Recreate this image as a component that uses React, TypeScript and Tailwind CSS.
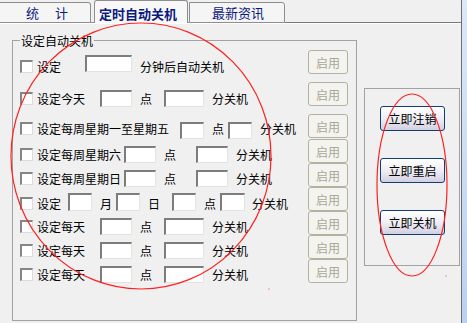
import React from 'react';

const FONT = "font-['Noto_Sans_CJK_SC',sans-serif]";

function Cb({ className = '' }: { className?: string }) {
  return (
    <span
      className={`block h-[13px] w-[13px] shrink-0 border-t-2 border-l-2 border-r border-b border-t-[#858585] border-l-[#858585] border-r-[#dcdcdc] border-b-[#dcdcdc] bg-white ${className}`}
    />
  );
}

function Inp({ className = '' }: { className?: string }) {
  return (
    <span
      className={`block h-[17px] shrink-0 border-t-2 border-l-2 border-r border-b border-t-[#7d7d7d] border-l-[#7d7d7d] border-r-[#e2e2e2] border-b-[#e2e2e2] bg-white ${className}`}
    />
  );
}

function T({ children, className = '' }: { children: React.ReactNode; className?: string }) {
  return <span className={`block shrink-0 whitespace-nowrap text-[12px] leading-[13px] text-black ${className}`}>{children}</span>;
}

function DailyRow({ label, mt }: { label: string; mt: string }) {
  return (
    <div className={`flex h-[17px] items-start ${mt}`}>
      <Cb className="ml-[7px] mt-[2px]" />
      <T className="ml-[4px] mt-[2px]">{label}</T>
      <Inp className="ml-[15px] w-[32px]" />
      <T className="ml-[8px] mt-[2px]">点</T>
      <Inp className="ml-[12px] w-[40px]" />
      <T className="ml-[8px] mt-[2px]">分关机</T>
    </div>
  );
}

function WeekRow({ label }: { label: string }) {
  return (
    <div className="mt-[7px] flex h-[17px] items-start">
      <Cb className="ml-[7px] mt-[2px]" />
      <T className="ml-[4px] mt-[2px]">{label}</T>
      <Inp className="ml-[3px] w-[32px]" />
      <T className="ml-[8px] mt-[2px]">点</T>
      <Inp className="ml-[20px] w-[32px]" />
      <T className="ml-[8px] mt-[2px]">分关机</T>
    </div>
  );
}

function EnableBtn({ className = '' }: { className?: string }) {
  return (
    <div
      className={`flex h-[24px] w-[40px] items-center justify-center rounded-[3px] border border-[#b4b29e] bg-[#f3f3ef] text-[12px] leading-[13px] text-[#aaa896] ${className}`}
    >
      启用
    </div>
  );
}

function ActionBtn({ label, className = '' }: { label: string; className?: string }) {
  return (
    <div
      className={`flex h-[25px] w-[65px] items-center justify-center rounded-[3px] border border-[#113f73] bg-linear-to-b from-[#ffffff] via-[#efeef5] to-[#d3cfe2] text-[12px] leading-[13px] text-black ${className}`}
    >
      {label}
    </div>
  );
}

export default function App() {
  return (
    <div className={`relative flex h-[323px] w-[467px] overflow-hidden bg-[#f0f0f0] ${FONT}`}>
      <div className="flex w-[461px] flex-col">
        {/* tab strip */}
        <div className="flex h-[23px] items-end text-[13px] leading-[13px] text-[#0c1a80]">
          <div className="h-[21px] w-[91px] rounded-tr-[3px] border-t border-r border-b border-[#8e8e8e] bg-[#f5f5f5] pt-[3px] pl-[26px] tracking-[1.5px]">
            统　计
          </div>
          <div className="h-[1px] w-[3px] bg-[#8e8e8e]" />
          <div className="h-[23px] w-[94px] rounded-t-[3px] border-t border-l border-r border-[#8e8e8e] bg-[#f8f8f8] pt-[6px] pl-[4px] font-bold">
            定时自动关机
          </div>
          <div className="h-[1px] w-[1px] bg-[#8e8e8e]" />
          <div className="h-[21px] w-[96px] rounded-tr-[3px] border border-[#8e8e8e] bg-[#f5f5f5] pt-[3px] pl-[22px]">
            最新资讯
          </div>
          <div className="h-[1px] flex-1 bg-[#7a7a7a]" />
        </div>

        {/* content */}
        <div className="flex flex-1 items-start border-t border-white">
          {/* left group box */}
          <div className="relative mt-[16px] ml-[12px] flex h-[281px] w-[345px] border border-[#a2a2a2]">
            <span className="absolute top-[-7px] left-[7px] bg-[#f0f0f0] px-[1px] text-[12px] leading-[13px] text-black">
              设定自动关机
            </span>

            <div className="flex w-[295px] flex-col">
              <div className="mt-[14px] flex h-[17px] items-start">
                <Cb className="ml-[7px] mt-[5px]" />
                <T className="ml-[4px] mt-[5px]">设定</T>
                <Inp className="ml-[24px] w-[47px]" />
                <T className="ml-[8px] mt-[5px]">分钟后自动关机</T>
              </div>

              <DailyRow label="设定今天" mt="mt-[18px]" />

              <div className="mt-[15px] flex h-[17px] items-start">
                <Cb className="ml-[7px]" />
                <T className="ml-[4px]">设定每周星期一至星期五</T>
                <Inp className="ml-[11px] w-[24px]" />
                <T className="ml-[8px]">点</T>
                <Inp className="ml-[4px] w-[24px]" />
                <T className="ml-[8px]">分关机</T>
              </div>

              <WeekRow label="设定每周星期六" />
              <WeekRow label="设定每周星期日" />

              <div className="mt-[6px] flex h-[18px] items-start">
                <Cb className="ml-[7px] mt-[4px]" />
                <T className="ml-[4px] mt-[4px]">设定</T>
                <Inp className="ml-[7px] h-[18px] w-[24px]" />
                <T className="ml-[8px] mt-[4px]">月</T>
                <Inp className="ml-[4px] h-[18px] w-[24px]" />
                <T className="ml-[8px] mt-[4px]">日</T>
                <Inp className="ml-[12px] h-[18px] w-[24px]" />
                <T className="ml-[8px] mt-[4px]">点</T>
                <Inp className="ml-[4px] h-[18px] w-[25px]" />
                <T className="ml-[7px] mt-[4px]">分关机</T>
              </div>

              <DailyRow label="设定每天" mt="mt-[7px]" />
              <DailyRow label="设定每天" mt="mt-[7px]" />
              <DailyRow label="设定每天" mt="mt-[7px]" />
            </div>

            <div className="flex w-[40px] flex-col">
              <EnableBtn className="mt-[9px]" />
              <EnableBtn className="mt-[8px]" />
              <EnableBtn className="mt-[8px]" />
              <EnableBtn className="mt-[1px]" />
              <EnableBtn />
              <EnableBtn />
              <EnableBtn />
              <EnableBtn />
              <EnableBtn />
            </div>
          </div>

          {/* right group box */}
          <div className="mt-[64px] ml-[7px] flex h-[178px] w-[96px] flex-col items-start border border-[#a2a2a2]">
            <ActionBtn label="立即注销" className="mt-[17px] ml-[15px]" />
            <ActionBtn label="立即重启" className="mt-[27px] ml-[15px]" />
            <ActionBtn label="立即关机" className="mt-[27px] ml-[15px]" />
          </div>
        </div>
      </div>

      <div className="w-[1px] bg-[#6f6f6f]" />
      <div className="w-[5px] bg-linear-to-b from-[#dde8f8] to-[#b9d1f2]" />

      {/* red annotation marks */}
      <svg className="pointer-events-none absolute inset-0" width={467} height={323} viewBox="0 0 467 323">
        <ellipse cx={141} cy={156} rx={130} ry={133} fill="none" stroke="#ff2020" strokeWidth={1.2} />
        <ellipse cx={412} cy={185} rx={35} ry={91} fill="none" stroke="#ff2020" strokeWidth={1.2} />
        <circle cx={269} cy={289} r={0.6} fill="#ff2020" />
        <circle cx={446} cy={276} r={0.6} fill="#ff2020" />
      </svg>
    </div>
  );
}
